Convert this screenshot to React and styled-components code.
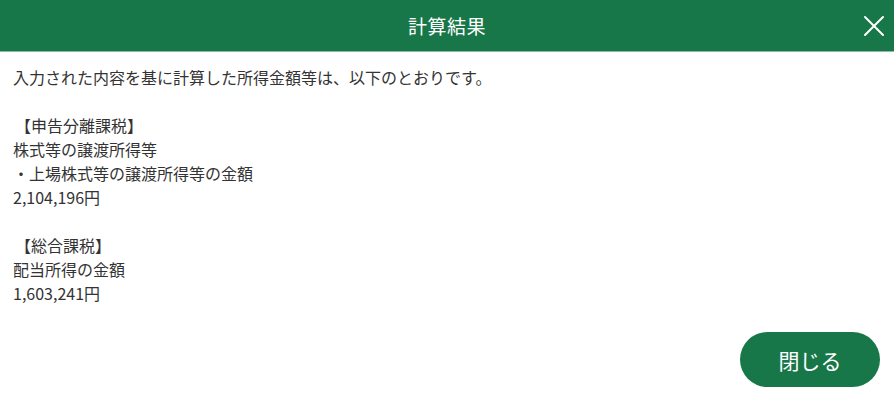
import React from 'react'
import styled, { createGlobalStyle } from 'styled-components'

const GlobalStyle = createGlobalStyle`
  html, body {
    margin: 0;
    padding: 0;
    background: #fff;
  }
  body {
    font-family: "Noto Sans CJK JP", "Noto Sans", sans-serif;
  }
`

const sections = [
  { heading: null, lines: ['入力された内容を基に計算した所得金額等は、以下のとおりです。'] },
  { heading: '【申告分離課税】', lines: ['株式等の譲渡所得等', '・上場株式等の譲渡所得等の金額', '2,104,196円'] },
  { heading: '【総合課税】', lines: ['配当所得の金額', '1,603,241円'] },
]

export default function App() {
  return (
    <>
      <GlobalStyle />
      <Dialog>
        <Header>
          <Title>計算結果</Title>
          <CloseIcon aria-label="閉じる">
            <svg width="22" height="22" viewBox="0 0 22 22">
              <path d="M2 2 L20 20 M20 2 L2 20" stroke="#fff" strokeWidth="2" strokeLinecap="round" />
            </svg>
          </CloseIcon>
        </Header>
        <Body>
          {sections.map((s, i) => (
            <Section key={i}>
              {s.heading && <Heading>{s.heading}</Heading>}
              {s.lines.map((l) => (
                <Line key={l}>{l}</Line>
              ))}
            </Section>
          ))}
        </Body>
        <Footer>
          <CloseButton>閉じる</CloseButton>
        </Footer>
      </Dialog>
    </>
  )
}

const Dialog = styled.div`
  width: 894px;
  height: 399px;
  display: flex;
  flex-direction: column;
  background: #fff;
`
const Header = styled.header`
  position: relative;
  height: 51px;
  background: #187748;
  border-bottom: 1px solid #8dbba3;
  display: flex;
  align-items: center;
  justify-content: center;
`
const Title = styled.h1`
  margin: 0;
  color: #fff;
  font-size: 19px;
  font-weight: 400;
  letter-spacing: 0.5px;
`
const CloseIcon = styled.button`
  position: absolute;
  right: 9px;
  top: 15px;
  padding: 0;
  border: 0;
  background: none;
  display: flex;
  cursor: pointer;
`
const Body = styled.div`
  padding: 13px 13px 0;
  color: #333;
  font-size: 16px;
  line-height: 24px;
  display: flex;
  flex-direction: column;
  gap: 24px;
`
const Section = styled.div`
  display: flex;
  flex-direction: column;
`
const Heading = styled.div`
  margin-left: 2px;
`
const Line = styled.div``
const Footer = styled.div`
  display: flex;
  justify-content: flex-end;
  padding: 27px 14px 0;
`
const CloseButton = styled.button`
  width: 140px;
  height: 55px;
  border: 0;
  border-radius: 28px;
  background: #187748;
  color: #fff;
  font-family: inherit;
  font-size: 21px;
  cursor: pointer;
`
